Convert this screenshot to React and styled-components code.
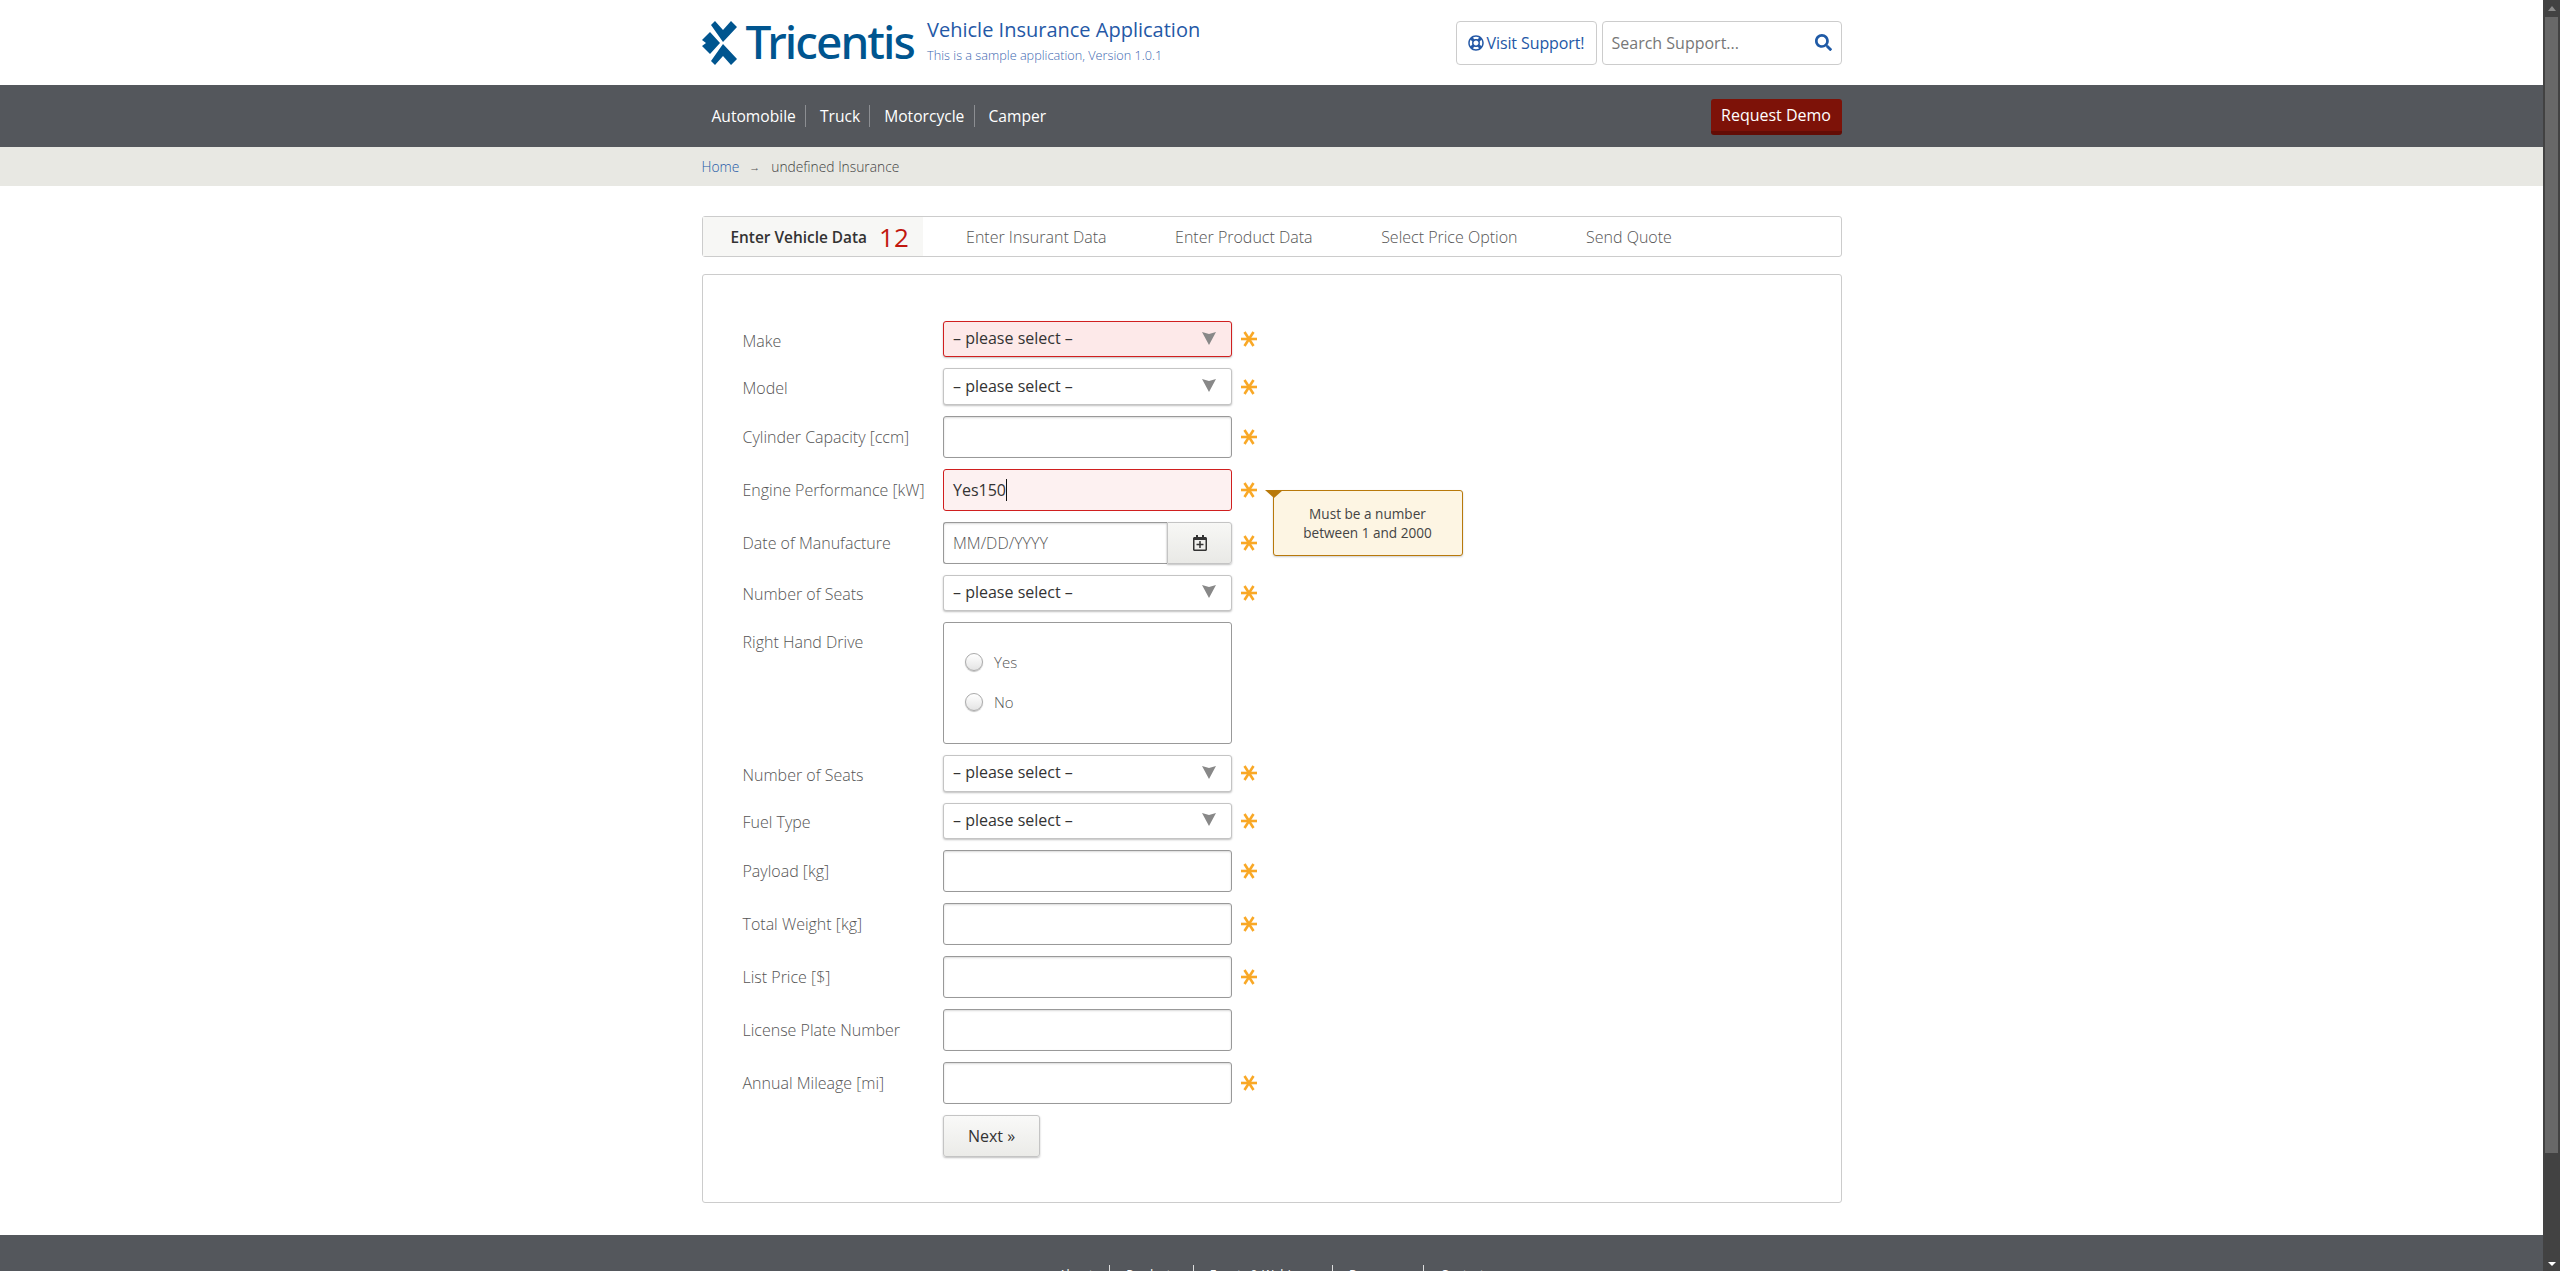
import React from "react";
import styled, { createGlobalStyle } from "styled-components";
import { FaRegLifeRing, FaSearch, FaRegCalendarPlus } from "react-icons/fa";

const GlobalStyle = createGlobalStyle`
  html, body {
    margin: 0;
    height: 100%;
    overflow: hidden;
    background: #fff;
    font-family: "Open Sans", "Noto Sans", sans-serif;
    color: #333;
  }
`;

const Frame = styled.div`
  display: flex;
  height: 100vh;
  overflow: hidden;
`;

const Page = styled.main`
  flex: 1;
  min-width: 0;
  overflow: hidden;
`;

const Container = styled.div`
  width: 1140px;
  margin: 0 auto;
  display: flex;
  align-items: center;
  box-sizing: border-box;
  height: 100%;
`;

const Header = styled.header`
  height: 85px;
`;

const Brand = styled.div`
  display: flex;
  align-items: center;
  color: #00558f;
  flex: 1;
`;

const LogoText = styled.span`
  font-family: "Noto Sans", sans-serif;
  font-size: 46px;
  font-weight: 500;
  letter-spacing: -1.9px;
  line-height: 44px;
  margin-left: 9px;
  margin-right: 13px;
  margin-top: -4px;
`;

const TitleBlock = styled.div`
  display: flex;
  flex-direction: column;
  margin-top: -6px;
`;

const AppTitle = styled.div`
  font-size: 20px;
  line-height: 28px;
  color: #2458a6;
`;

const AppSub = styled.div`
  font-size: 12.7px;
  font-weight: 300;
  line-height: 18px;
  color: #3c67b0;
  margin-top: 2px;
`;

const SupportButton = styled.div`
  display: flex;
  align-items: center;
  gap: 3px;
  width: 141px;
  height: 44px;
  box-sizing: border-box;
  justify-content: center;
  border: 1px solid #ccc;
  border-radius: 4px;
  font-size: 16px;
  letter-spacing: -0.1px;
  color: #2458a6;
`;

const SearchBox = styled.div`
  display: flex;
  align-items: center;
  justify-content: space-between;
  width: 240px;
  height: 44px;
  margin-left: 5px;
  padding: 0 9px;
  box-sizing: border-box;
  border: 1px solid #ccc;
  border-radius: 4px;
  font-size: 16px;
  color: #777;
  svg {
    color: #1f5aa6;
  }
`;

const NavBar = styled.nav`
  height: 62px;
  background: #54575c;
`;

const NavList = styled.div`
  flex: 1;
  display: flex;
  align-items: center;
`;

const NavItem = styled.a`
  font-size: 15.6px;
  line-height: 22px;
  color: #fff;
  padding: 0 9.2px 0 13.9px;
  border-right: 1px solid #8c8e92;
  &:first-child {
    padding-left: 10px;
  }
  &:last-child {
    border-right: 0;
  }
`;

const DemoButton = styled.a`
  display: flex;
  align-items: center;
  justify-content: center;
  width: 131px;
  height: 36px;
  box-sizing: border-box;
  margin-top: 1px;
  background: #7d1208;
  border-bottom: 4px solid #630c05;
  border-radius: 3px;
  color: #fff;
  font-size: 16px;
`;

const BreadcrumbBar = styled.div`
  height: 39px;
  background: #e8e8e3;
  font-size: 13.8px;
  font-weight: 300;
  color: #444;
`;

const Crumb = styled.a`
  color: #2458a6;
`;

const CrumbArrow = styled.span`
  font-size: 11px;
  margin: 0 11px 0 10px;
  color: #555;
`;

const Content = styled.div`
  width: 1140px;
  margin: 30px auto 32px;
`;

const Tabs = styled.div`
  display: flex;
  align-items: stretch;
  height: 41px;
  box-sizing: border-box;
  border: 1px solid #ccc;
  border-radius: 3px;
  font-size: 16px;
`;

const Tab = styled.div`
  display: flex;
  align-items: center;
  padding: ${(p) => (p.$active ? "2px 14px 0 28px" : "0 34.3px")};
  margin-right: ${(p) => (p.$active ? "9px" : "0")};
  background: ${(p) => (p.$active ? "#f7f7f5" : "transparent")};
  font-size: ${(p) => (p.$active ? "15.4px" : "16px")};
  font-weight: ${(p) => (p.$active ? 600 : 300)};
  color: ${(p) => (p.$active ? "#333" : "#555")};
`;

const ErrorCount = styled.span`
  font-size: 26px;
  font-weight: 400;
  line-height: 30px;
  color: #c1170f;
  margin: 0 0 2px 12px;
`;

const FormCard = styled.form`
  margin-top: 17px;
  padding: 46px 40px 45px;
  border: 1px solid #ccc;
  border-radius: 3px;
  display: flex;
  flex-direction: column;
  gap: 11px;
`;

const Row = styled.div`
  display: flex;
  align-items: center;
  position: relative;
`;

const Label = styled.label`
  width: 200.5px;
  flex: none;
  font-size: 16px;
  font-weight: 300;
  color: #555;
  line-height: 20px;
  margin-top: ${(p) => (p.$select ? "3px" : "0")};
  align-self: ${(p) => (p.$top ? "flex-start" : "center")};
  padding-top: ${(p) => (p.$top ? "10px" : "0")};
`;

const SelectBox = styled.div`
  width: 289px;
  height: 36.4px;
  box-sizing: border-box;
  display: flex;
  align-items: center;
  justify-content: space-between;
  padding: 0 15px 2px 9px;
  border: 1px solid ${(p) => (p.$error ? "#d01f1f" : "#c4c4c4")};
  border-radius: 3px;
  background: ${(p) => (p.$error ? "#fde9e9" : "#fff")};
  box-shadow: 0 1px 2px rgba(0, 0, 0, 0.25);
  font-size: 16px;
  color: #333;
`;

const TextBox = styled.div`
  width: 289px;
  height: 42px;
  box-sizing: border-box;
  display: flex;
  align-items: center;
  padding: 0 9px;
  border: 1px solid ${(p) => (p.$error ? "#d01f1f" : "#999")};
  border-radius: 3px;
  background: ${(p) => (p.$error ? "#fdf1f1" : "#fff")};
  box-shadow: ${(p) => (p.$error ? "none" : "inset 0 1px 2px rgba(0, 0, 0, 0.15)")};
  font-size: 16px;
  color: #333;
`;

const Caret = styled.span`
  width: 1px;
  height: 22px;
  background: #111;
`;

const DateGroup = styled.div`
  width: 289px;
  height: 42px;
  display: flex;
`;

const DateInput = styled.div`
  flex: 1;
  display: flex;
  align-items: center;
  padding: 0 9px;
  border: 1px solid #999;
  border-right: 0;
  border-radius: 3px 0 0 3px;
  box-shadow: inset 0 1px 2px rgba(0, 0, 0, 0.15);
  font-size: 16px;
  font-weight: 300;
  color: #555;
`;

const DateAddon = styled.div`
  width: 65px;
  flex: none;
  box-sizing: border-box;
  display: flex;
  align-items: center;
  justify-content: center;
  border: 1px solid #c4c4c4;
  border-radius: 0 3px 3px 0;
  background: linear-gradient(#f7f7f5, #e9e9e6);
  box-shadow: 0 1px 2px rgba(0, 0, 0, 0.25);
  color: #333;
`;

const RadioBox = styled.div`
  width: 289px;
  height: 122px;
  box-sizing: border-box;
  padding: 30px 0 0 21px;
  border: 1px solid #999;
  border-radius: 3px;
  display: flex;
  flex-direction: column;
  gap: 22px;
`;

const RadioOption = styled.div`
  display: flex;
  align-items: center;
  gap: 11px;
  height: 18px;
  font-size: 15px;
  font-weight: 300;
  color: #555;
`;

const RadioDot = styled.span`
  width: 18px;
  height: 18px;
  box-sizing: border-box;
  border: 1px solid #aaa;
  border-radius: 50%;
  background: linear-gradient(#fff, #e4e4e4);
  box-shadow: 0 1px 1px rgba(0, 0, 0, 0.25);
`;

const Required = styled.svg`
  width: 16px;
  height: 16px;
  margin-left: 9px;
  flex: none;
`;

const Tooltip = styled.div`
  position: absolute;
  left: 530px;
  top: 21px;
  width: 190px;
  height: 66px;
  box-sizing: border-box;
  display: flex;
  align-items: center;
  justify-content: center;
  text-align: center;
  background: #fdf5e3;
  border: 1px solid #b8790b;
  border-radius: 3px;
  box-shadow: 0 1px 2px rgba(0, 0, 0, 0.2);
  font-size: 13.6px;
  line-height: 19px;
  color: #444;
  &::before {
    content: "";
    position: absolute;
    left: -9px;
    top: -1px;
    border-style: solid;
    border-width: 8px 9px 0 9px;
    border-color: #b8790b transparent transparent transparent;
  }
`;

const NextButton = styled.button`
  width: 97px;
  height: 42px;
  margin-left: 200.5px;
  padding: 0;
  border: 1px solid #c4c4c4;
  border-radius: 3px;
  background: linear-gradient(#f9f9f8, #ebebe8);
  box-shadow: 0 1px 2px rgba(0, 0, 0, 0.25);
  font-family: inherit;
  font-size: 16px;
  color: #333;
  display: block;
`;

const Footer = styled.footer`
  height: 120px;
  background: #54575c;
  padding-top: 30px;
  box-sizing: border-box;
`;

const FooterLinks = styled.div`
  display: flex;
  justify-content: center;
  color: #fff;
  font-size: 12.2px;
  line-height: 20px;
`;

const FooterLink = styled.a`
  padding: 0 16px;
  border-right: 1px solid #ddd;
  &:last-child {
    border-right: 0;
  }
`;

const ScrollBar = styled.aside`
  width: 17px;
  flex: none;
  background: #424242;
  display: flex;
  flex-direction: column;
  align-items: center;
`;

const ScrollArrow = styled.span`
  width: 0;
  height: 0;
  border-left: 4px solid transparent;
  border-right: 4px solid transparent;
  margin: ${(p) => (p.$down ? "auto 0 5px" : "6px 0 6px")};
  border-top: ${(p) => (p.$down ? "4px solid #fff" : "0")};
  border-bottom: ${(p) => (p.$down ? "0" : "5px solid #8a8a8a")};
`;

const ScrollThumb = styled.span`
  width: 13px;
  height: 1136px;
  background: #686868;
`;

const TricentisMark = () => (
  <svg width="35" height="44" viewBox="0 0 35 44" fill="#00558f">
    <polygon points="9,4 13,0 21,9 29,0 35,6 21,21" />
    <polygon points="0,19 8,11 18,22 8,33 0,25 4,22" />
    <polygon points="9,40 13,44 21,35 29,44 35,38 21,23" />
  </svg>
);

const Asterisk = () => (
  <Required viewBox="0 0 16 16">
    <g stroke="#f9a826" strokeWidth="2.6" strokeLinecap="butt">
      <line x1="0" y1="8" x2="16" y2="8" />
      <line x1="3.5" y1="1" x2="12.5" y2="15" />
      <line x1="12.5" y1="1" x2="3.5" y2="15" />
    </g>
  </Required>
);

const SelectArrow = () => (
  <svg width="14" height="13" viewBox="0 0 14 13" fill="#888">
    <polygon points="0,0 7,2 14,0 7,13" />
  </svg>
);

const SelectRow = ({ label, error }) => (
  <Row>
    <Label $select>{label}</Label>
    <SelectBox $error={error}>
      – please select –
      <SelectArrow />
    </SelectBox>
    <Asterisk />
  </Row>
);

const InputRow = ({ label, required = true }) => (
  <Row>
    <Label>{label}</Label>
    <TextBox />
    {required && <Asterisk />}
  </Row>
);

const App = () => (
  <Frame>
    <GlobalStyle />
    <Page>
      <Header>
        <Container>
          <Brand>
            <TricentisMark />
            <LogoText>Tricentis</LogoText>
            <TitleBlock>
              <AppTitle>Vehicle Insurance Application</AppTitle>
              <AppSub>This is a sample application, Version 1.0.1</AppSub>
            </TitleBlock>
          </Brand>
          <SupportButton>
            <FaRegLifeRing size={16} />
            Visit Support!
          </SupportButton>
          <SearchBox>
            Search Support...
            <FaSearch size={17} />
          </SearchBox>
        </Container>
      </Header>
      <NavBar>
        <Container>
          <NavList>
            <NavItem>Automobile</NavItem>
            <NavItem>Truck</NavItem>
            <NavItem>Motorcycle</NavItem>
            <NavItem>Camper</NavItem>
          </NavList>
          <DemoButton>Request Demo</DemoButton>
        </Container>
      </NavBar>
      <BreadcrumbBar>
        <Container>
          <Crumb>Home</Crumb>
          <CrumbArrow>→</CrumbArrow>
          undefined Insurance
        </Container>
      </BreadcrumbBar>
      <Content>
        <Tabs>
          <Tab $active>
            Enter Vehicle Data
            <ErrorCount>12</ErrorCount>
          </Tab>
          <Tab>Enter Insurant Data</Tab>
          <Tab>Enter Product Data</Tab>
          <Tab>Select Price Option</Tab>
          <Tab>Send Quote</Tab>
        </Tabs>
        <FormCard>
          <SelectRow label="Make" error />
          <SelectRow label="Model" />
          <InputRow label="Cylinder Capacity [ccm]" />
          <Row>
            <Label>Engine Performance [kW]</Label>
            <TextBox $error>
              Yes150
              <Caret />
            </TextBox>
            <Asterisk />
            <Tooltip>
              Must be a number
              <br />
              between 1 and 2000
            </Tooltip>
          </Row>
          <Row>
            <Label>Date of Manufacture</Label>
            <DateGroup>
              <DateInput>MM/DD/YYYY</DateInput>
              <DateAddon>
                <FaRegCalendarPlus size={16} />
              </DateAddon>
            </DateGroup>
            <Asterisk />
          </Row>
          <SelectRow label="Number of Seats" />
          <Row>
            <Label $top>Right Hand Drive</Label>
            <RadioBox>
              <RadioOption>
                <RadioDot />
                Yes
              </RadioOption>
              <RadioOption>
                <RadioDot />
                No
              </RadioOption>
            </RadioBox>
          </Row>
          <SelectRow label="Number of Seats" />
          <SelectRow label="Fuel Type" />
          <InputRow label="Payload [kg]" />
          <InputRow label="Total Weight [kg]" />
          <InputRow label="List Price [$]" />
          <InputRow label="License Plate Number" required={false} />
          <InputRow label="Annual Mileage [mi]" />
          <NextButton type="button">Next »</NextButton>
        </FormCard>
      </Content>
      <Footer>
        <FooterLinks>
          <FooterLink>About</FooterLink>
          <FooterLink>Products</FooterLink>
          <FooterLink>Events &amp; Webinars</FooterLink>
          <FooterLink>Resources</FooterLink>
          <FooterLink>Contact</FooterLink>
        </FooterLinks>
      </Footer>
    </Page>
    <ScrollBar>
      <ScrollArrow />
      <ScrollThumb />
      <ScrollArrow $down />
    </ScrollBar>
  </Frame>
);

export default App;
